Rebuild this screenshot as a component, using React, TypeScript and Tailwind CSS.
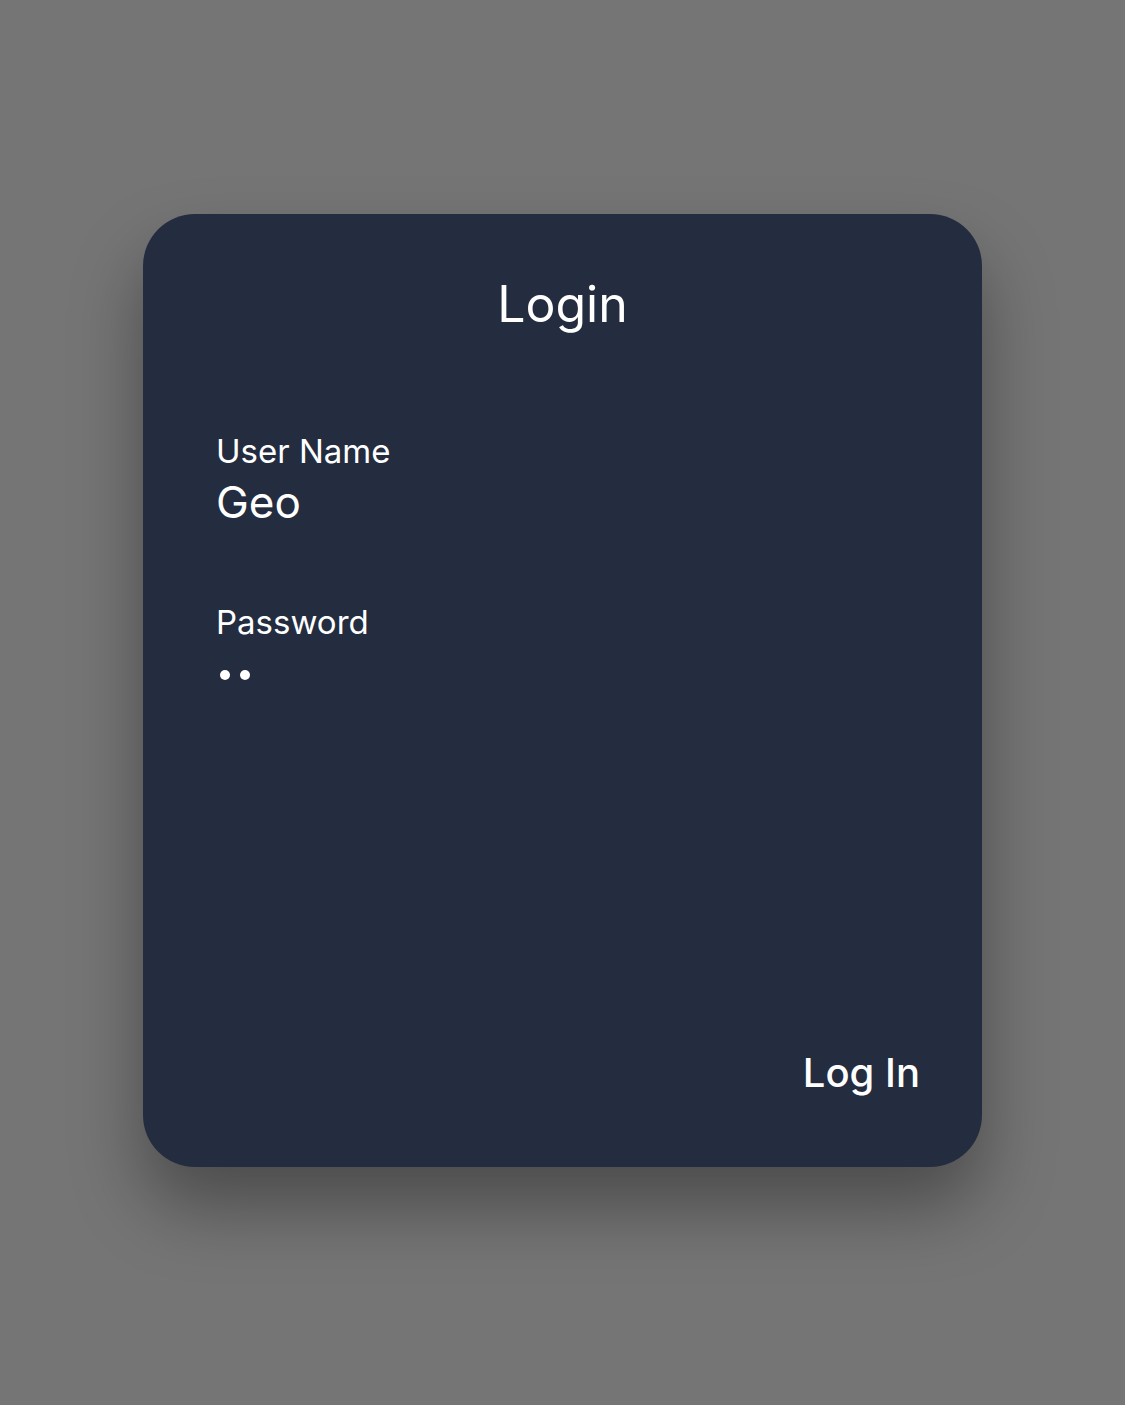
export default function App() {
  return (
    <main
      className="min-h-screen w-full bg-[#757575] pt-[214px]"
      style={{ fontFamily: "Inter, 'Noto Sans', sans-serif" }}
    >
      <div className="mx-auto flex h-[953px] w-[839px] flex-col rounded-[52px] bg-[#242c3f] pb-[70px] pl-[73px] pr-[62px] pt-[60px] text-white shadow-[0_40px_70px_rgba(0,0,0,0.35)]">
        <h1 className="pr-[11px] text-center text-[50px] leading-[60px] font-normal">Login</h1>

        <div className="mt-[98px] flex flex-col">
          <label className="text-[33px] leading-[38px]">User Name</label>
          <div className="mt-[6px] text-[44px] leading-[52px]">Geo</div>
        </div>

        <div className="mt-[75px] flex flex-col">
          <label className="text-[33px] leading-[38px]">Password</label>
          <div className="mt-[29px] flex items-center gap-[10px] pl-[4px]">
            <span className="block h-[10px] w-[10px] rounded-full bg-white" />
            <span className="block h-[10px] w-[10px] rounded-full bg-white" />
          </div>
        </div>

        <div className="mt-auto flex justify-end">
          <button className="text-[40px] leading-[48px] font-medium">Log In</button>
        </div>
      </div>
    </main>
  );
}
